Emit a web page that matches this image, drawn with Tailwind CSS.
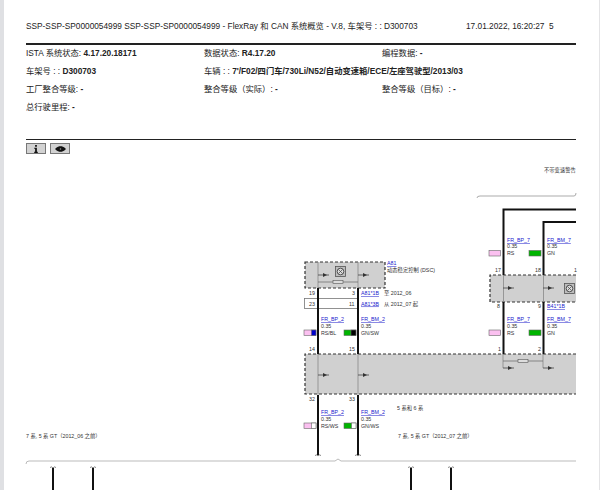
<!DOCTYPE html>
<html lang="en">
<head>
  <meta charset="UTF-8" />
  <title>FlexRay 和 CAN 系统概览</title>
  <script src="https://cdn.jsdelivr.net/npm/@tailwindcss/browser@4"></script>
</head>
<body class="h-[490px] w-[600px] overflow-hidden bg-white flex font-['Liberation_Sans','Noto_Sans_CJK_SC',sans-serif] text-[#222]">
  <div class="w-[4px] shrink-0 bg-[#dfe0e3]"></div>

  <main class="w-[595px] shrink-0">
    <!-- Header -->
    <div class="pl-[22px] w-[572px]">
      <div class="h-[43px] pt-[21px] flex text-[8.3px] leading-[10px] whitespace-nowrap">
        <span class="w-[440px]">SSP-SSP-SP0000054999 SSP-SSP-SP0000054999 - FlexRay 和 CAN 系统概览 - V.8, 车架号 : : D300703</span>
        <span>17.01.2022, 16:20:27&nbsp; 5</span>
      </div>
      <div class="h-[1.5px] bg-[#222]"></div>
      <div class="grid grid-cols-[178px_178px_1fr] auto-rows-[18px] items-center text-[8.3px] whitespace-nowrap">
        <div>ISTA 系统状态: <b>4.17.20.18171</b></div>
        <div>数据状态: <b>R4.17.20</b></div>
        <div>编程数据: <b>-</b></div>
        <div>车架号 : : <b>D300703</b></div>
        <div class="col-span-2">车辆 : : <b>7'/F02/四门车/730Li/N52/自动变速箱/ECE/左座驾驶型/2013/03</b></div>
        <div>工厂整合等级: <b>-</b></div>
        <div>整合等级（实际）: <b>-</b></div>
        <div>整合等级（目标）: <b>-</b></div>
        <div>总行驶里程: <b>-</b></div>
      </div>
      <div class="h-[1.5px] mt-[22px] bg-[#222]"></div>
      <div class="flex gap-[4px] mt-[3px] h-[12px]">
        <button class="w-[20px] h-[11px] flex items-center justify-center bg-[#d2d2d2] border border-[#777]">
          <svg width="6" height="8" viewBox="0 0 6 9"><path fill="#111" d="M2 0h2v2H2zM1 3h3v4.500h1V9H1V7.500h1V4.200H1z"/></svg>
        </button>
        <button class="w-[20px] h-[11px] flex items-center justify-center bg-[#d2d2d2] border border-[#777]">
          <svg width="11" height="6" viewBox="0 0 14 7"><path fill="#111" d="M0 3.500C3 .5 5 0 7 0s4 .5 7 3.500C11 6.500 9 7 7 7s-4-.5-7-3.500z"/><circle cx="7" cy="3.500" r="1" fill="#999"/></svg>
        </button>
      </div>
    </div>

    <!-- Wiring diagram -->
    <svg class="block" width="595" height="335" viewBox="4 155 595 335" font-size="5.300" fill="#333">
      <defs>
        <g id="arrow">
          <path d="M0 0h11" stroke="#444" stroke-width=".8" fill="none"/>
          <path d="M5 -2l4 2-4 2z" fill="#333"/>
        </g>
        <g id="ecu-icon">
          <rect x=".5" y=".5" width="10" height="10" fill="#bdbdbd" stroke="#555" stroke-width=".8"/>
          <circle cx="5.500" cy="5.500" r="3.300" fill="#ddd" stroke="#444" stroke-width=".9"/>
          <path d="M3.500 3.500l4 4M7.500 3.500l-4 4" stroke="#444" stroke-width=".7"/>
        </g>
        <path id="fork" d="M-3 1.500 Q-1 0 0 2 Q1 0 3 1.500" fill="none" stroke="#555" stroke-width=".7"/>
      </defs>

      <!-- Control units -->
      <rect x="305" y="262" width="80" height="26" fill="#d0d0d0" stroke="#333" stroke-width="1.200" stroke-dasharray="3 2"/>
      <path d="M318 262v26M358 262v26" stroke="#888" stroke-width=".8"/>
      <path d="M318 282h40" stroke="#666" stroke-width=".7"/>
      <rect x="333" y="280.500" width="10" height="3" fill="#ddd" stroke="#555" stroke-width=".6"/>
      <use href="#arrow" x="318" y="275"/>
      <use href="#arrow" x="358" y="275"/>
      <use href="#ecu-icon" x="335" y="266"/>

      <path d="M576 354H305v40h271" fill="#d0d0d0" stroke="#333" stroke-width="1.200" stroke-dasharray="3 2"/>
      <path d="M318 354v41M358 354v41M503 354v14M543 354v14" stroke="#888" stroke-width=".8"/>
      <use href="#arrow" x="318" y="375"/>
      <use href="#arrow" x="358" y="375"/>
      <path d="M503 361h40" stroke="#666" stroke-width=".7"/>
      <rect x="518" y="359.500" width="10" height="3" fill="#ddd" stroke="#555" stroke-width=".6"/>
      <use href="#arrow" x="503" y="368"/>
      <use href="#arrow" x="543" y="368"/>

      <path d="M576 275H490v27h86" fill="#d0d0d0" stroke="#333" stroke-width="1.200" stroke-dasharray="3 2"/>
      <path d="M503.500 275v27M543.500 275v27" stroke="#888" stroke-width=".8"/>
      <use href="#arrow" x="503" y="288"/>
      <use href="#arrow" x="543" y="288"/>
      <use href="#ecu-icon" x="564" y="283"/>

      <!-- Connector table -->
      <rect x="304.500" y="298.500" width="54" height="10" fill="#fff" stroke="#777" stroke-width=".8"/>

      <!-- Wires -->
      <g stroke="#111" stroke-width="2" fill="none">
        <path d="M318 288v66M358 288v66M318 395v60M358 395v60"/>
        <path d="M503.500 302v52M543.500 302v52"/>
        <path d="M576 209.500H503.500V275M576 222H543.500V275" />
        <path d="M53 468v22M93 468v22M411 468v22M451 468v22"/>
      </g>
      <use href="#fork" x="318" y="454"/>
      <use href="#fork" x="358" y="454"/>
      <use href="#fork" x="53" y="466"/>
      <use href="#fork" x="93" y="466"/>
      <use href="#fork" x="411" y="466"/>
      <use href="#fork" x="451" y="466"/>

      <!-- Brackets -->
      <path d="M26 464Q26 461 29 461H335L338 459L341 461H576" fill="none" stroke="#bbb" stroke-width="1"/>
      <path d="M477 198Q477 196 480 196H574Q576 196 576 193" fill="none" stroke="#888" stroke-width=".7"/>

      <!-- Colour swatches -->
      <g stroke="#666" stroke-width=".6">
        <rect x="304" y="330" width="12" height="5.500" fill="#fbc0f0"/>
        <rect x="311.500" y="330" width="4.500" height="5.500" fill="#0000cc"/>
        <rect x="344" y="330" width="12" height="5.500" fill="#00b400"/>
        <rect x="351" y="330" width="5" height="5.500" fill="#000"/>
        <rect x="304" y="423" width="12" height="5.500" fill="#fbc0f0"/>
        <rect x="311.500" y="423" width="4.500" height="5.500" fill="#fff"/>
        <rect x="344" y="423" width="12" height="5.500" fill="#00b400"/>
        <rect x="351.500" y="423" width="4.500" height="5.500" fill="#fff"/>
        <rect x="489" y="250.500" width="11.500" height="5.500" fill="#fbc0f0"/>
        <rect x="529" y="250.500" width="12" height="5.500" fill="#00b400"/>
        <rect x="489" y="330" width="11.500" height="5.500" fill="#fbc0f0"/>
        <rect x="529" y="330" width="12" height="5.500" fill="#00b400"/>
      </g>

      <!-- Links -->
      <g fill="#2222cc" text-decoration="underline">
        <text x="387" y="265">A81</text>
        <text x="361" y="295">A81*1B</text>
        <text x="361" y="305.500">A81*3B</text>
        <text x="321" y="321">FR_BP_2</text>
        <text x="361" y="321">FR_BM_2</text>
        <text x="321" y="414">FR_BP_2</text>
        <text x="361" y="414">FR_BM_2</text>
        <text x="507" y="242">FR_BP_7</text>
        <text x="547" y="242">FR_BM_7</text>
        <text x="507" y="321">FR_BP_7</text>
        <text x="547" y="321">FR_BM_7</text>
        <text x="547" y="308">B41*1B</text>
      </g>

      <!-- Labels -->
      <text x="387" y="272">动态稳定控制 (DSC)</text>
      <text x="384" y="295">至 2012_06</text>
      <text x="384" y="305.500">从 2012_07 起</text>
      <text x="309" y="295">19</text>
      <text x="352" y="295">3</text>
      <text x="309" y="305.500">23</text>
      <text x="349" y="305.500">11</text>
      <text x="321" y="328">0.35</text>
      <text x="321" y="334.500">RS/BL</text>
      <text x="361" y="328">0.35</text>
      <text x="361" y="334.500">GN/SW</text>
      <text x="309" y="351">14</text>
      <text x="349" y="351">15</text>
      <text x="309" y="401">32</text>
      <text x="349" y="401">33</text>
      <text x="321" y="421">0.35</text>
      <text x="321" y="428">RS/WS</text>
      <text x="361" y="421">0.35</text>
      <text x="361" y="428">GN/WS</text>
      <text x="397" y="410">5 系和 6 系</text>
      <text x="398" y="438">7 系, 5 系 GT（2012_07 之前）</text>
      <text x="26" y="438">7 系, 5 系 GT（2012_06 之前）</text>
      <text x="544" y="172">不带变速警告</text>
      <text x="507" y="248">0.35</text>
      <text x="507" y="255">RS</text>
      <text x="547" y="248">0.35</text>
      <text x="547" y="255">GN</text>
      <text x="495" y="272">17</text>
      <text x="535" y="272">18</text>
      <text x="574" y="272">1</text>
      <text x="497" y="308">8</text>
      <text x="538" y="308">9</text>
      <text x="507" y="328">0.35</text>
      <text x="507" y="334.500">RS</text>
      <text x="547" y="328">0.35</text>
      <text x="547" y="334.500">GN</text>
      <text x="498" y="351">1</text>
      <text x="538" y="351">2</text>
    </svg>
  </main>

  <div class="w-[1px] shrink-0 bg-[#e4e4e6]"></div>
</body>
</html>
